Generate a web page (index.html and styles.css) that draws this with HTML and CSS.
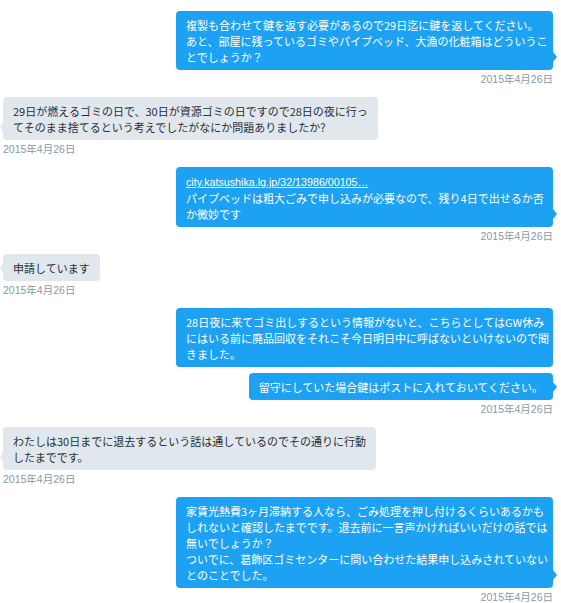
FILE: index.html
```html
<!DOCTYPE html>
<html lang="ja">
<head>
<meta charset="utf-8">
<link rel="stylesheet" href="styles.css">
</head>
<body>
<div class="chat">
  <div class="group out">
    <p class="bubble wide">複製も合わせて鍵を返す必要があるので29日迄に鍵を返してください。<br>あと、部屋に残っているゴミやパイプベッド、大漁の化粧箱はどういうこ<br>とでしょうか？</p>
    <time class="ts">2015年4月26日</time>
  </div>
  <div class="group in">
    <p class="bubble">29日が燃えるゴミの日で、30日が資源ゴミの日ですので28日の夜に行っ<br>てそのまま捨てるという考えでしたがなにか問題ありましたか?</p>
    <time class="ts">2015年4月26日</time>
  </div>
  <div class="group out">
    <p class="bubble wide"><a class="link" href="#">city.katsushika.lg.jp/32/13986/00105…</a><br>パイプベッドは粗大ごみで申し込みが必要なので、残り4日で出せるか否<br>か微妙です</p>
    <time class="ts">2015年4月26日</time>
  </div>
  <div class="group in">
    <p class="bubble">申請しています</p>
    <time class="ts">2015年4月26日</time>
  </div>
  <div class="group out">
    <p class="bubble wide">28日夜に来てゴミ出しするという情報がないと、こちらとしてはGW休み<br>にはいる前に廃品回収をそれこそ今日明日中に呼ばないといけないので聞<br>きました。</p>
    <p class="bubble">留守にしていた場合鍵はポストに入れておいてください。</p>
    <time class="ts">2015年4月26日</time>
  </div>
  <div class="group in">
    <p class="bubble">わたしは30日までに退去するという話は通しているのでその通りに行動<br>したまでです。</p>
    <time class="ts">2015年4月26日</time>
  </div>
  <div class="group out">
    <p class="bubble wide">家賃光熱費3ヶ月滞納する人なら、ごみ処理を押し付けるくらいあるかも<br>しれないと確認したまでです。退去前に一言声かければいいだけの話では<br>無いでしょうか？<br>ついでに、葛飾区ゴミセンターに問い合わせた結果申し込みされていない<br>とのことでした。</p>
    <time class="ts">2015年4月26日</time>
  </div>
</div>
</body>
</html>
```

FILE: styles.css
```css
html, body {
  margin: 0;
  padding: 0;
  background: #ffffff;
}

body {
  font-family: "Noto Sans CJK JP", "Noto Sans", sans-serif;
}

.chat {
  display: flex;
  flex-direction: column;
  padding: 11px 8px 0 3px;
}

.group {
  display: flex;
  flex-direction: column;
  margin-bottom: 11px;
}

.group.out {
  align-items: flex-end;
}

.group.in {
  align-items: flex-start;
}

.bubble {
  position: relative;
  box-sizing: border-box;
  margin: 0;
  padding: 6px 10px 5px;
  font-size: 11px;
  line-height: 16px;
  border-radius: 4px;
  white-space: nowrap;
}

.bubble.wide {
  width: 377px;
}

.bubble + .bubble {
  margin-top: 6px;
}

.out .bubble {
  background: #1da1f2;
  color: #ffffff;
}

.in .bubble {
  background: #e1e8ed;
  color: #292f33;
}

.out .bubble:last-of-type::after,
.in .bubble:last-of-type::after {
  content: "";
  position: absolute;
  bottom: 8px;
  border-top: 5px solid transparent;
  border-bottom: 5px solid transparent;
}

.out .bubble:last-of-type::after {
  right: -4px;
  border-left: 4px solid #1da1f2;
}

.in .bubble:last-of-type::after {
  left: -3px;
  border-right: 3px solid #e1e8ed;
}

.link {
  color: #ffffff;
  text-decoration: underline;
  font-family: "Liberation Sans", "Noto Sans CJK JP", sans-serif;
  font-size: 10.7px;
}

.ts {
  display: block;
  margin-top: 2px;
  font-family: "Liberation Sans", "Noto Sans CJK JP", sans-serif;
  font-size: 10.5px;
  line-height: 14px;
  color: #8899a6;
}
```
